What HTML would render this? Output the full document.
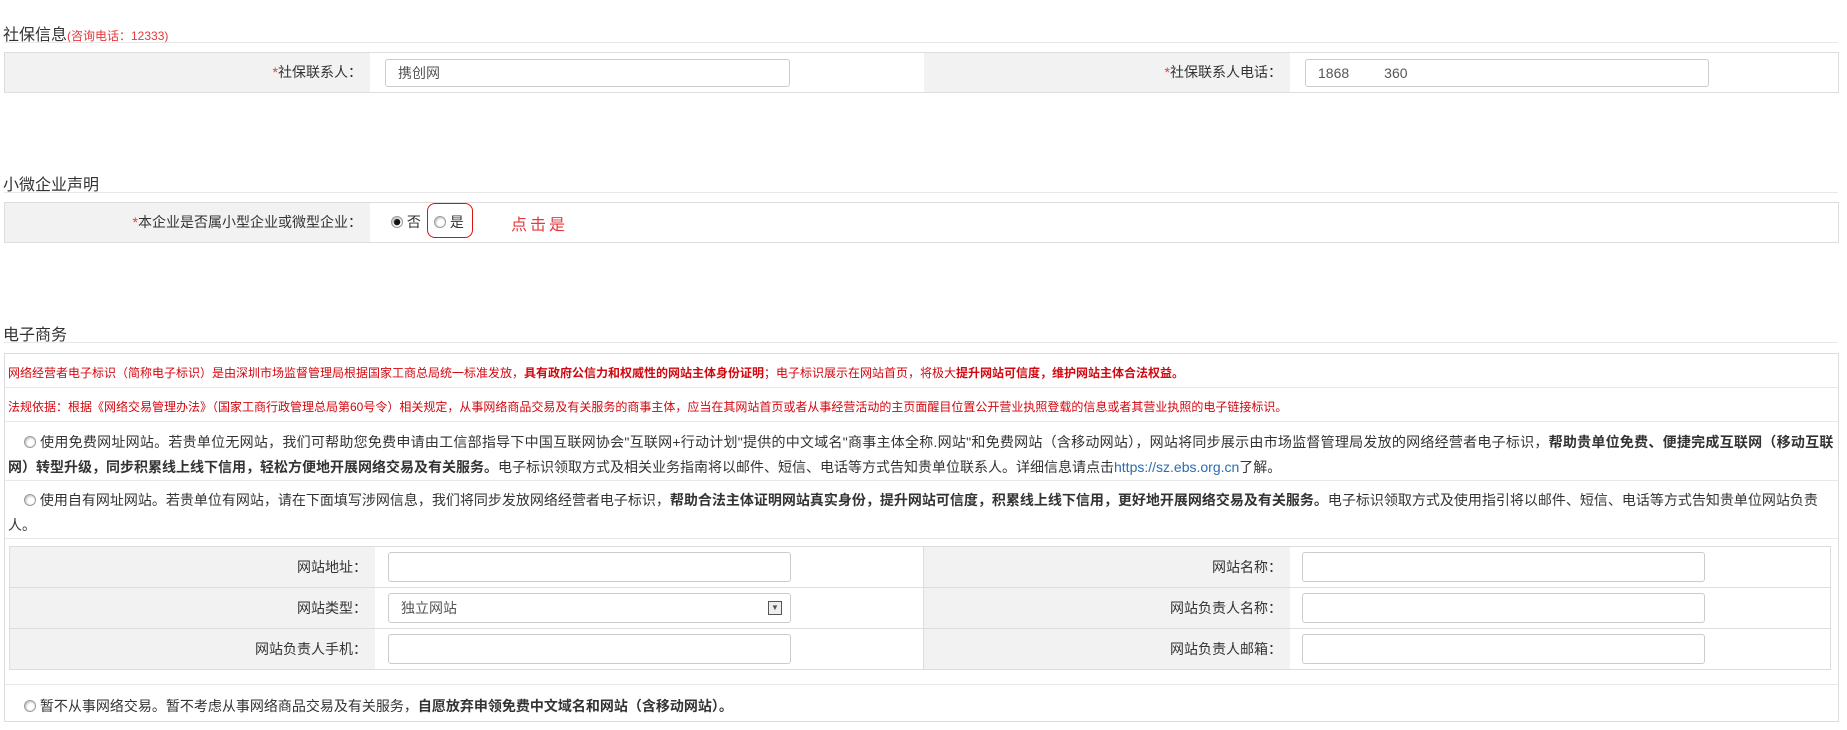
<!DOCTYPE html>
<html><head><meta charset="utf-8"><style>
*{margin:0;padding:0;box-sizing:border-box}
body{width:1847px;height:730px;background:#fff;position:relative;overflow:hidden;font-family:"Liberation Sans","Noto Sans CJK SC",sans-serif;color:#333;font-size:14px}
.a{position:absolute;white-space:nowrap}
.h{font-size:16px;color:#333}
.ln{position:absolute;left:4px;right:9px;height:1px;background:#e8e8e8}
.box{position:absolute;border:1px solid #ddd;background:#fff}
.lab{position:absolute;background:#f2f2f2;text-align:right;padding-right:8px}
.inp{position:absolute;border:1px solid #ccc;border-radius:3px;background:#fff;font-size:14px;color:#555;padding-left:12px}
.r{color:#e4393c}
.radio{display:inline-block;width:12px;height:12px;border:1px solid #999;border-radius:50%;vertical-align:-1px;background:#fff;box-shadow:inset 1px 1px 2px #bbb}
.red{color:#d2070f;font-size:12px}
b{font-weight:bold}
</style></head><body>
<div class="a h" style="left:3px;top:21px">社保信息<span class="r" style="font-size:12px">(咨询电话：12333)</span></div>
<div class="ln" style="top:42px"></div>
<div class="box" style="left:4px;top:52px;width:1835px;height:41px"></div>
<div class="lab" style="left:5px;top:53px;width:365px;height:39px;line-height:39px"><span class="r">*</span>社保联系人：</div>
<div class="lab" style="left:924px;top:53px;width:366px;height:39px;line-height:39px"><span class="r">*</span>社保联系人电话：</div>
<div class="inp" style="left:385px;top:59px;width:405px;height:28px;line-height:26px">携创网</div>
<div class="inp" style="left:1305px;top:59px;width:404px;height:28px;line-height:26px">1868&nbsp;&nbsp;&nbsp;&nbsp;&nbsp;&nbsp;&nbsp;&nbsp;&nbsp;360</div>

<div class="a h" style="left:3px;top:171px">小微企业声明</div>
<div class="ln" style="top:192px"></div>
<div class="box" style="left:4px;top:202px;width:1835px;height:41px"></div>
<div class="lab" style="left:5px;top:203px;width:365px;height:39px;line-height:39px"><span class="r">*</span>本企业是否属小型企业或微型企业：</div>
<div class="a" style="left:391px;top:212px"><span class="radio" style="background:radial-gradient(#111 0 3px,#fff 3.5px)"></span> 否</div>
<div class="a" style="left:434px;top:212px"><span class="radio"></span> 是</div>
<div class="a" style="left:427px;top:203px;width:46px;height:35px;border:1px solid #d11;border-radius:8px"></div>
<div class="a r" style="left:511px;top:211px;font-size:16px;letter-spacing:3px">点击是</div>

<div class="a h" style="left:3px;top:321px">电子商务</div>
<div class="ln" style="top:342px"></div>
<div class="box" style="left:4px;top:353px;width:1835px;height:369px"></div>
<div class="ln" style="top:387px;left:5px;right:9px"></div>
<div class="ln" style="top:421px;left:5px;right:9px"></div>
<div class="ln" style="top:480px;left:5px;right:9px"></div>
<div class="ln" style="top:538px;left:5px;right:9px"></div>
<div class="ln" style="top:684px;left:5px;right:9px"></div>
<div class="a red" style="left:8px;top:364px">网络经营者电子标识（简称电子标识）是由深圳市场监督管理局根据国家工商总局统一标准发放，<b>具有政府公信力和权威性的网站主体身份证明</b>；电子标识展示在网站首页，将极大<b>提升网站可信度，维护网站主体合法权益。</b></div>
<div class="a red" style="left:8px;top:398px">法规依据：根据《网络交易管理办法》（国家工商行政管理总局第60号令）相关规定，从事网络商品交易及有关服务的商事主体，应当在其网站首页或者从事经营活动的主页面醒目位置公开营业执照登载的信息或者其营业执照的电子链接标识。</div>
<div class="a" style="left:24px;top:432px;font-size:14px;letter-spacing:0.25px"><span class="radio"></span> 使用免费网址网站。若贵单位无网站，我们可帮助您免费申请由工信部指导下中国互联网协会"互联网+行动计划"提供的中文域名"商事主体全称.网站"和免费网站（含移动网站），网站将同步展示由市场监督管理局发放的网络经营者电子标识，<b>帮助贵单位免费、便捷完成互联网（移动互联</b></div>
<div class="a" style="left:8px;top:457px;font-size:14px"><b>网）转型升级，同步积累线上线下信用，轻松方便地开展网络交易及有关服务。</b>电子标识领取方式及相关业务指南将以邮件、短信、电话等方式告知贵单位联系人。详细信息请点击<span style="color:#2a6db5">https://sz.ebs.org.cn</span>了解。</div>
<div class="a" style="left:24px;top:490px;font-size:14px;letter-spacing:0px"><span class="radio"></span> 使用自有网址网站。若贵单位有网站，请在下面填写涉网信息，我们将同步发放网络经营者电子标识，<b>帮助合法主体证明网站真实身份，提升网站可信度，积累线上线下信用，更好地开展网络交易及有关服务。</b>电子标识领取方式及使用指引将以邮件、短信、电话等方式告知贵单位网站负责</div>
<div class="a" style="left:8px;top:515px;font-size:14px">人。</div>

<div class="box" style="left:9px;top:546px;width:1822px;height:124px;border-color:#ddd"></div>
<div class="lab" style="left:10px;top:547px;width:365px;height:40px;line-height:40px">网站地址：</div>
<div class="lab" style="left:924px;top:547px;width:366px;height:40px;line-height:40px">网站名称：</div>
<div class="ln" style="top:587px;left:10px;right:17px;background:#ddd"></div>
<div class="lab" style="left:10px;top:588px;width:365px;height:40px;line-height:40px">网站类型：</div>
<div class="lab" style="left:924px;top:588px;width:366px;height:40px;line-height:40px">网站负责人名称：</div>
<div class="ln" style="top:628px;left:10px;right:17px;background:#ddd"></div>
<div class="lab" style="left:10px;top:629px;width:365px;height:40px;line-height:40px">网站负责人手机：</div>
<div class="lab" style="left:924px;top:629px;width:366px;height:40px;line-height:40px">网站负责人邮箱：</div>
<div class="a" style="left:923px;top:547px;width:1px;height:122px;background:#ddd"></div>
<div class="inp" style="left:388px;top:552px;width:403px;height:30px"></div>
<div class="inp" style="left:1302px;top:552px;width:403px;height:30px"></div>
<div class="inp" style="left:388px;top:593px;width:403px;height:30px;line-height:28px">独立网站<span style="position:absolute;right:8px;top:7px;width:14px;height:14px;border:1px solid #555;background:#eee;font-size:8px;line-height:12px;text-align:center">▼</span></div>
<div class="inp" style="left:1302px;top:593px;width:403px;height:30px"></div>
<div class="inp" style="left:388px;top:634px;width:403px;height:30px"></div>
<div class="inp" style="left:1302px;top:634px;width:403px;height:30px"></div>

<div class="a" style="left:24px;top:696px;font-size:14px"><span class="radio"></span> 暂不从事网络交易。暂不考虑从事网络商品交易及有关服务，<b>自愿放弃申领免费中文域名和网站（含移动网站）。</b></div>
</body></html>
